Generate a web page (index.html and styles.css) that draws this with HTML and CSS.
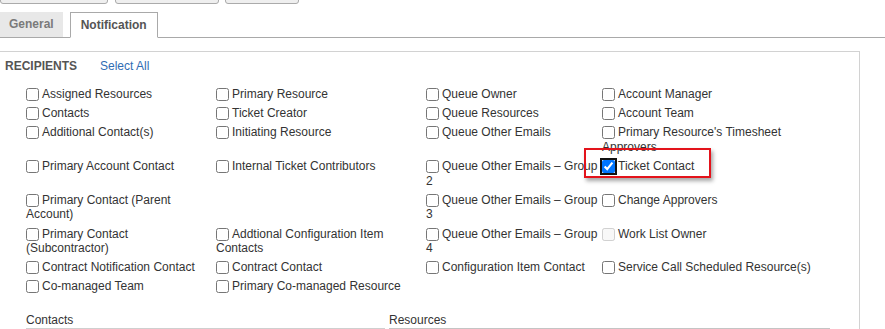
FILE: index.html
```html
<!DOCTYPE html>
<html>
<head>
<meta charset="utf-8">
<link rel="stylesheet" href="styles.css">
</head>
<body>
<div class="toolbar">
  <span class="tbtn w1"></span>
  <span class="tbtn w2"></span>
  <span class="tbtn w3"></span>
</div>
<div class="tabs">
  <div class="tab">General</div>
  <div class="tab active">Notification</div>
</div>
<div class="panel">
  <div class="section-head">
    <span class="title">RECIPIENTS</span>
    <a class="select-all">Select All</a>
  </div>
  <table class="recipients">
    <colgroup>
      <col class="c1"><col class="c2"><col class="c3"><col class="c4">
    </colgroup>
    <tr>
      <td><label><input type="checkbox">Assigned Resources</label></td>
      <td><label><input type="checkbox">Primary Resource</label></td>
      <td><label><input type="checkbox">Queue Owner</label></td>
      <td><label><input type="checkbox">Account Manager</label></td>
    </tr>
    <tr>
      <td><label><input type="checkbox">Contacts</label></td>
      <td><label><input type="checkbox">Ticket Creator</label></td>
      <td><label><input type="checkbox">Queue Resources</label></td>
      <td><label><input type="checkbox">Account Team</label></td>
    </tr>
    <tr>
      <td><label><input type="checkbox">Additional Contact(s)</label></td>
      <td><label><input type="checkbox">Initiating Resource</label></td>
      <td><label><input type="checkbox">Queue Other Emails</label></td>
      <td><label><input type="checkbox">Primary Resource's Timesheet Approvers</label></td>
    </tr>
    <tr>
      <td><label><input type="checkbox">Primary Account Contact</label></td>
      <td><label><input type="checkbox">Internal Ticket Contributors</label></td>
      <td><label><input type="checkbox">Queue Other Emails – Group 2</label></td>
      <td class="marked"><label><input type="checkbox" class="focused" checked>Ticket Contact</label><span class="highlight"></span></td>
    </tr>
    <tr>
      <td><label><input type="checkbox">Primary Contact (Parent Account)</label></td>
      <td></td>
      <td><label><input type="checkbox">Queue Other Emails – Group 3</label></td>
      <td><label><input type="checkbox">Change Approvers</label></td>
    </tr>
    <tr>
      <td><label><input type="checkbox">Primary Contact (Subcontractor)</label></td>
      <td><label><input type="checkbox">Addtional Configuration Item Contacts</label></td>
      <td><label><input type="checkbox">Queue Other Emails – Group 4</label></td>
      <td><label><input type="checkbox" disabled>Work List Owner</label></td>
    </tr>
    <tr>
      <td><label><input type="checkbox">Contract Notification Contact</label></td>
      <td><label><input type="checkbox">Contract Contact</label></td>
      <td><label><input type="checkbox">Configuration Item Contact</label></td>
      <td><label><input type="checkbox">Service Call Scheduled Resource(s)</label></td>
    </tr>
    <tr>
      <td><label><input type="checkbox">Co-managed Team</label></td>
      <td><label><input type="checkbox">Primary Co-managed Resource</label></td>
      <td></td>
      <td></td>
    </tr>
  </table>
  <div class="lists">
    <div class="list contacts">
      <div class="list-label">Contacts</div>
      <div class="list-box"></div>
    </div>
    <div class="list resources">
      <div class="list-label">Resources</div>
      <div class="list-box"><div class="list-bar"></div></div>
    </div>
  </div>
</div>
</body>
</html>
```

FILE: styles.css
```css
html, body {
  margin: 0;
  padding: 0;
  background: #ffffff;
}
body {
  font-family: "Liberation Sans", Arial, sans-serif;
  font-size: 12px;
  line-height: 15px;
  color: #333333;
  overflow: hidden;
}

/* top toolbar (cut off) */
.toolbar {
  height: 4px;
  overflow: hidden;
  display: flex;
  align-items: flex-end;
}
.tbtn {
  display: block;
  height: 20px;
  box-sizing: border-box;
  border: 1px solid #ababab;
  border-radius: 0 0 3px 3px;
  background: #efefef;
}
.tbtn.w1 { width: 108px; }
.tbtn.w2 { width: 104px; margin-left: 7px; }
.tbtn.w3 { width: 74px; margin-left: 6px; }

/* tabs */
.tabs {
  margin-top: 8px;
  height: 25px;
  display: flex;
  gap: 7px;
  border-bottom: 1px solid #a9a9a9;
}
.tab {
  height: 25px;
  line-height: 25px;
  padding: 0 9px;
  background: #e8e8e8;
  color: #7a7a7a;
  font-weight: bold;
}
.tab.active {
  box-sizing: border-box;
  height: 26px;
  line-height: 24px;
  padding: 0 10px;
  background: #ffffff;
  color: #555555;
  border: 1px solid #a9a9a9;
  border-bottom-color: #ffffff;
}

/* panel */
.panel {
  margin-top: 13px;
  width: 860px;
  box-sizing: border-box;
  border: 1px solid #d2d2d2;
  border-left: none;
  padding: 7px 0 0 5px;
  height: 400px;
}
.section-head {
  display: flex;
  align-items: baseline;
}
.title {
  font-weight: bold;
  color: #555555;
}
.select-all {
  margin-left: 23px;
  color: #2f6cb3;
  cursor: pointer;
}

.recipients {
  margin: 11px 0 0 21px;
  border-collapse: collapse;
  border-spacing: 0;
  table-layout: fixed;
  width: 798px;
  line-height: 14.6px;
}
.recipients col.c1 { width: 190px; }
.recipients col.c2 { width: 210px; }
.recipients col.c3 { width: 176px; }
.recipients col.c4 { width: 222px; }
.recipients td {
  padding: 2.25px 0;
  vertical-align: top;
}
.recipients td:nth-child(1),
.recipients td:nth-child(2) {
  padding-right: 10px;
}
.recipients label {
  color: #333333;
}
.recipients input[type="checkbox"] {
  width: 13px;
  height: 13px;
  margin: 0 3px 0 0;
  vertical-align: -3px;
}
.recipients input.focused {
  outline: 2px solid #111111;
  outline-offset: 0;
  border-radius: 2px;
}

.marked {
  position: relative;
}
.highlight {
  position: absolute;
  left: -18px;
  top: -9px;
  width: 127px;
  height: 30px;
  box-sizing: border-box;
  border: 2px solid #e3131b;
  box-shadow: 2px 3px 4px rgba(0, 0, 0, 0.35);
  pointer-events: none;
}

/* bottom lists */
.lists {
  margin: 17px 0 0 21px;
  display: flex;
  gap: 4px;
}
.list-label {
  color: #333333;
}
.list.contacts { width: 359px; }
.list.resources { width: 441px; }
.list-box {
  height: 80px;
  box-sizing: border-box;
  border: 1px solid #cfcfcf;
}
.list.resources .list-box {
  border-color: #c4c4c4;
}
.list-bar {
  height: 2px;
  margin-right: 16px;
  background: #a9b3bd;
}
```
